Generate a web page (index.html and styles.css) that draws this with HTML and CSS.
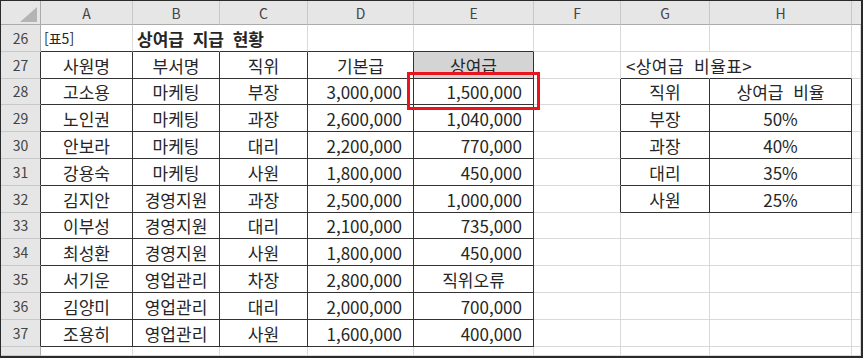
FILE: index.html
```html
<!DOCTYPE html>
<html lang="ko">
<head>
<meta charset="utf-8">
<title>상여급 지급 현황</title>
<link rel="stylesheet" href="styles.css">
</head>
<body>
<div class="sheet">
  <div class="corner"><svg width="17" height="15" viewBox="0 0 17 15"><polygon points="17,0 17,15 0,15" fill="#b4b4b4"/></svg></div>
  <div class="ch">A</div><div class="ch">B</div><div class="ch">C</div><div class="ch">D</div><div class="ch">E</div><div class="ch">F</div><div class="ch">G</div><div class="ch">H</div><div class="ch last"></div>

  <div class="rh">26</div>
  <div class="c bb small">[표5]</div><div class="c bb title nogrid">상여급 지급 현황</div><div class="c bb"></div><div class="c bb"></div><div class="c bb"></div><div class="c"></div><div class="c"></div><div class="c"></div><div class="c"></div>

  <div class="rh dk">27</div>
  <div class="c ctr br bb">사원명</div><div class="c ctr br bb">부서명</div><div class="c ctr br bb">직위</div><div class="c ctr br bb">기본급</div><div class="c ctr br bb fill">상여급</div><div class="c"></div><div class="c bb lbl nogrid">&lt;상여급 비율표&gt;</div><div class="c bb"></div><div class="c"></div>

  <div class="rh dk">28</div>
  <div class="c ctr br bb">고소용</div><div class="c ctr br bb">마케팅</div><div class="c ctr br bb">부장</div><div class="c num br bb">3,000,000</div><div class="c num br bb sel">1,500,000<span class="redbox"></span></div><div class="c br"></div><div class="c ctr br bb">직위</div><div class="c ctr br bb">상여급 비율</div><div class="c"></div>

  <div class="rh dk">29</div>
  <div class="c ctr br bb">노인권</div><div class="c ctr br bb">마케팅</div><div class="c ctr br bb">과장</div><div class="c num br bb">2,600,000</div><div class="c num br bb">1,040,000</div><div class="c br"></div><div class="c ctr br bb">부장</div><div class="c ctr br bb">50%</div><div class="c"></div>

  <div class="rh dk">30</div>
  <div class="c ctr br bb">안보라</div><div class="c ctr br bb">마케팅</div><div class="c ctr br bb">대리</div><div class="c num br bb">2,200,000</div><div class="c num br bb">770,000</div><div class="c br"></div><div class="c ctr br bb">과장</div><div class="c ctr br bb">40%</div><div class="c"></div>

  <div class="rh dk">31</div>
  <div class="c ctr br bb">강용숙</div><div class="c ctr br bb">마케팅</div><div class="c ctr br bb">사원</div><div class="c num br bb">1,800,000</div><div class="c num br bb">450,000</div><div class="c br"></div><div class="c ctr br bb">대리</div><div class="c ctr br bb">35%</div><div class="c"></div>

  <div class="rh dk">32</div>
  <div class="c ctr br bb">김지안</div><div class="c ctr br bb">경영지원</div><div class="c ctr br bb">과장</div><div class="c num br bb">2,500,000</div><div class="c num br bb">1,000,000</div><div class="c br"></div><div class="c ctr br bb">사원</div><div class="c ctr br bb">25%</div><div class="c"></div>

  <div class="rh dk">33</div>
  <div class="c ctr br bb">이부성</div><div class="c ctr br bb">경영지원</div><div class="c ctr br bb">대리</div><div class="c num br bb">2,100,000</div><div class="c num br bb">735,000</div><div class="c"></div><div class="c"></div><div class="c"></div><div class="c"></div>

  <div class="rh dk">34</div>
  <div class="c ctr br bb">최성환</div><div class="c ctr br bb">경영지원</div><div class="c ctr br bb">사원</div><div class="c num br bb">1,800,000</div><div class="c num br bb">450,000</div><div class="c"></div><div class="c"></div><div class="c"></div><div class="c"></div>

  <div class="rh dk">35</div>
  <div class="c ctr br bb">서기운</div><div class="c ctr br bb">영업관리</div><div class="c ctr br bb">차장</div><div class="c num br bb">2,800,000</div><div class="c ctr br bb">직위오류</div><div class="c"></div><div class="c"></div><div class="c"></div><div class="c"></div>

  <div class="rh dk">36</div>
  <div class="c ctr br bb">김양미</div><div class="c ctr br bb">영업관리</div><div class="c ctr br bb">대리</div><div class="c num br bb">2,000,000</div><div class="c num br bb">700,000</div><div class="c"></div><div class="c"></div><div class="c"></div><div class="c"></div>

  <div class="rh dk">37</div>
  <div class="c ctr br bb">조용히</div><div class="c ctr br bb">영업관리</div><div class="c ctr br bb">사원</div><div class="c num br bb">1,600,000</div><div class="c num br bb">400,000</div><div class="c"></div><div class="c"></div><div class="c"></div><div class="c"></div>

  <div class="rh tail"></div>
  <div class="c"></div><div class="c"></div><div class="c"></div><div class="c"></div><div class="c"></div><div class="c"></div><div class="c"></div><div class="c"></div><div class="c"></div>
</div>
</body>
</html>
```
FILE: styles.css
```css
html, body {
  margin: 0;
  padding: 0;
  background: #fff;
}

body {
  width: 863px;
  height: 358px;
  overflow: hidden;
  font-family: "Noto Sans CJK KR", "Noto Sans", sans-serif;
}

.sheet {
  box-sizing: border-box;
  width: 863px;
  height: 358px;
  border: 1px solid #2a2a2a;
  border-right-width: 2px;
  border-bottom-width: 2px;
  display: grid;
  grid-template-columns: 40px 92px 87px 88px 106px 120px 87px 89px 142px 1fr;
  grid-template-rows: 24px repeat(12, 26.8px) 1fr;
  overflow: hidden;
}

.sheet > div {
  box-sizing: border-box;
  border-right: 1px solid #d9d9d9;
  border-bottom: 1px solid #d9d9d9;
  display: flex;
  align-items: center;
  white-space: nowrap;
  overflow: hidden;
  min-width: 0;
  min-height: 0;
}

.corner {
  background: #e6e6e6;
  justify-content: flex-end;
  align-items: flex-end !important;
  padding: 0 3px 2px 0;
  border-right-color: #ababab !important;
  border-bottom-color: #ababab !important;
}

.corner svg {
  display: block;
}

.ch {
  background: #e6e6e6;
  color: #444;
  font-size: 14px;
  justify-content: center;
  border-right-color: #c8c8c8 !important;
  border-bottom-color: #ababab !important;
}

.ch.last {
  border-right: none !important;
}

.rh {
  background: #e6e6e6;
  color: #444;
  font-size: 14px;
  justify-content: center;
  border-right-color: #ababab !important;
  border-bottom-color: #c8c8c8 !important;
}

.rh.dk {
  border-right-color: #333 !important;
}

.c {
  font-size: 17px;
  color: #262626;
  padding: 1px 4px 0;
  line-height: 1;
  word-spacing: 5px;
}

.ctr {
  justify-content: center;
}

.num {
  justify-content: flex-end;
  padding-right: 11px;
}

.br {
  border-right-color: #333 !important;
}

.bb {
  border-bottom-color: #333 !important;
}

.fill {
  background: #d4d4d4;
}

.small {
  font-size: 14px;
  padding-left: 3px;
}

.title {
  font-weight: bold;
  font-size: 17px;
  overflow: visible !important;
  word-spacing: 4px;
}

.nogrid {
  border-right-color: transparent !important;
}

.lbl {
  padding-left: 5px;
  letter-spacing: 0.4px;
  overflow: visible !important;
  position: relative;
  z-index: 1;
}

.sel {
  position: relative;
  overflow: visible !important;
}

.redbox {
  position: absolute;
  left: -7px;
  top: -7px;
  right: -7px;
  bottom: -6px;
  border: 3px solid #e8161c;
  pointer-events: none;
}
```
